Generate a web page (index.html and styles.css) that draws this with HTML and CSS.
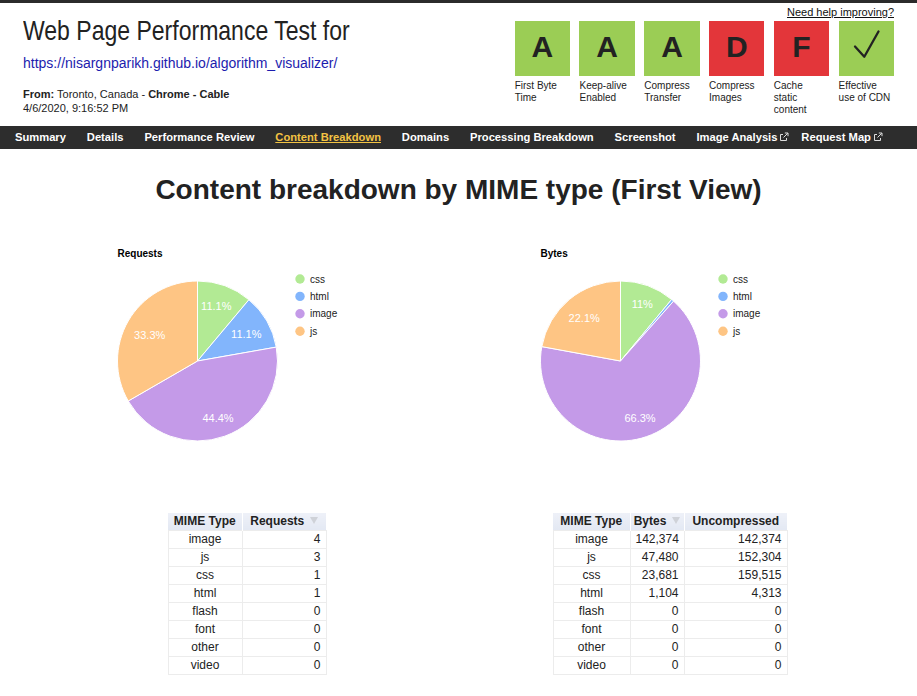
FILE: index.html
```html
<!DOCTYPE html>
<html lang="en">
<head>
<meta charset="utf-8">
<title>WebPageTest - Content Breakdown</title>
<link rel="stylesheet" href="styles.css">
</head>
<body>
<header class="header">
  <div class="test-info">
    <h1 class="title">Web Page Performance Test for</h1>
    <a class="url" href="#">https://nisargnparikh.github.io/algorithm_visualizer/</a>
    <div class="meta"><b>From:</b> Toronto, Canada - <b>Chrome - Cable</b><br>4/6/2020, 9:16:52 PM</div>
  </div>
  <div class="grades-wrap">
    <a class="help" href="#">Need help improving?</a>
    <ul class="grades">
      <li class="grade"><div class="box good">A</div><div class="label">First Byte<br>Time</div></li>
      <li class="grade"><div class="box good">A</div><div class="label">Keep-alive<br>Enabled</div></li>
      <li class="grade"><div class="box good">A</div><div class="label">Compress<br>Transfer</div></li>
      <li class="grade"><div class="box bad">D</div><div class="label">Compress<br>Images</div></li>
      <li class="grade"><div class="box bad">F</div><div class="label">Cache<br>static<br>content</div></li>
      <li class="grade"><div class="box good"><svg class="check" viewBox="0 0 55 55" width="55" height="55"><path d="M16 25.5L25.3 35.7L39.5 10.5" fill="none" stroke="#222" stroke-width="2.3" stroke-linecap="round" stroke-linejoin="round"/></svg></div><div class="label">Effective<br>use of CDN</div></li>
    </ul>
  </div>
</header>
<nav class="nav">
  <a href="#">Summary</a>
  <a href="#">Details</a>
  <a href="#">Performance Review</a>
  <a href="#" class="active">Content Breakdown</a>
  <a href="#">Domains</a>
  <a href="#">Processing Breakdown</a>
  <a href="#">Screenshot</a>
  <a href="#" class="ext">Image Analysis<svg class="ext-icon" viewBox="0 0 10 10" width="10" height="10"><path d="M4 2.5H1.5v6h6V6" fill="none" stroke="#ddd" stroke-width="1"/><path d="M4.5 5.5L8.8 1.2M5.8 1H9V4.2" fill="none" stroke="#ddd" stroke-width="1"/></svg></a>
  <a href="#" class="ext">Request Map<svg class="ext-icon" viewBox="0 0 10 10" width="10" height="10"><path d="M4 2.5H1.5v6h6V6" fill="none" stroke="#ddd" stroke-width="1"/><path d="M4.5 5.5L8.8 1.2M5.8 1H9V4.2" fill="none" stroke="#ddd" stroke-width="1"/></svg></a>
</nav>
<main class="main">
  <h2 class="heading">Content breakdown by MIME type (First View)</h2>
  <div class="charts">
    <section class="col">
      <svg class="chart" viewBox="0 0 423 250" width="423" height="250">
        <text x="81.5" y="32" class="chart-title">Requests</text>
        <g class="pie">
          <path fill="#b2ea94" d="M161.5 136L161.5 56A80 80 0 0 1 212.92 74.72Z"/>
          <path fill="#82b5fc" d="M161.5 136L212.92 74.72A80 80 0 0 1 240.28 122.11Z"/>
          <path fill="#c49ae8" d="M161.5 136L240.28 122.11A80 80 0 0 1 92.22 176Z"/>
          <path fill="#fec584" d="M161.5 136L92.22 176A80 80 0 0 1 161.5 56Z"/>
        </g>
        <g class="slice-labels">
          <text x="180.3" y="84.7">11.1%</text>
          <text x="210.3" y="113">11.1%</text>
          <text x="182" y="196.7">44.4%</text>
          <text x="113.7" y="114">33.3%</text>
        </g>
        <g class="legend">
          <circle cx="264" cy="54" r="4.7" fill="#b2ea94"/><text x="274" y="57.5">css</text>
          <circle cx="264" cy="71.4" r="4.7" fill="#82b5fc"/><text x="274" y="74.9">html</text>
          <circle cx="264" cy="88.8" r="4.7" fill="#c49ae8"/><text x="274" y="92.3">image</text>
          <circle cx="264" cy="106.2" r="4.7" fill="#fec584"/><text x="274" y="109.7">js</text>
        </g>
      </svg>
      <table class="data req">
        <colgroup><col class="c-type"><col class="c-req"></colgroup>
        <thead><tr><th>MIME Type</th><th>Requests<span class="sort"></span></th></tr></thead>
        <tbody>
          <tr><td class="type">image</td><td class="num">4</td></tr>
          <tr><td class="type">js</td><td class="num">3</td></tr>
          <tr><td class="type">css</td><td class="num">1</td></tr>
          <tr><td class="type">html</td><td class="num">1</td></tr>
          <tr><td class="type">flash</td><td class="num">0</td></tr>
          <tr><td class="type">font</td><td class="num">0</td></tr>
          <tr><td class="type">other</td><td class="num">0</td></tr>
          <tr><td class="type">video</td><td class="num">0</td></tr>
        </tbody>
      </table>
    </section>
    <section class="col">
      <svg class="chart" viewBox="0 0 423 250" width="423" height="250">
        <text x="81.5" y="32" class="chart-title">Bytes</text>
        <g class="pie">
          <path fill="#b2ea94" d="M161.5 136L161.5 56A80 80 0 0 1 212.63 74.47Z"/>
          <path fill="#82b5fc" d="M161.5 136L212.63 74.47A80 80 0 0 1 214.59 76.15Z"/>
          <path fill="#c49ae8" d="M161.5 136L214.59 76.15A80 80 0 1 1 82.8 121.62Z"/>
          <path fill="#fec584" d="M161.5 136L82.8 121.62A80 80 0 0 1 161.5 56Z"/>
        </g>
        <g class="slice-labels">
          <text x="183.3" y="83">11%</text>
          <text x="125.2" y="97.3">22.1%</text>
          <text x="181" y="196.7">66.3%</text>
        </g>
        <g class="legend">
          <circle cx="264" cy="54" r="4.7" fill="#b2ea94"/><text x="274" y="57.5">css</text>
          <circle cx="264" cy="71.4" r="4.7" fill="#82b5fc"/><text x="274" y="74.9">html</text>
          <circle cx="264" cy="88.8" r="4.7" fill="#c49ae8"/><text x="274" y="92.3">image</text>
          <circle cx="264" cy="106.2" r="4.7" fill="#fec584"/><text x="274" y="109.7">js</text>
        </g>
      </svg>
      <table class="data bytes">
        <colgroup><col class="c-type2"><col class="c-bytes"><col class="c-unc"></colgroup>
        <thead><tr><th>MIME Type</th><th>Bytes<span class="sort"></span></th><th>Uncompressed</th></tr></thead>
        <tbody>
          <tr><td class="type">image</td><td class="num">142,374</td><td class="num">142,374</td></tr>
          <tr><td class="type">js</td><td class="num">47,480</td><td class="num">152,304</td></tr>
          <tr><td class="type">css</td><td class="num">23,681</td><td class="num">159,515</td></tr>
          <tr><td class="type">html</td><td class="num">1,104</td><td class="num">4,313</td></tr>
          <tr><td class="type">flash</td><td class="num">0</td><td class="num">0</td></tr>
          <tr><td class="type">font</td><td class="num">0</td><td class="num">0</td></tr>
          <tr><td class="type">other</td><td class="num">0</td><td class="num">0</td></tr>
          <tr><td class="type">video</td><td class="num">0</td><td class="num">0</td></tr>
        </tbody>
      </table>
    </section>
  </div>
</main>
</body>
</html>
```

FILE: styles.css
```css
* { box-sizing: border-box; }

body {
  margin: 0;
  font-family: "Liberation Sans", Arial, sans-serif;
  color: #222;
  background: #fff;
}

/* ---------- header ---------- */
.header {
  display: flex;
  justify-content: space-between;
  height: 126px;
  border-top: 3px solid #2b2b2b;
  padding: 0 23px;
}

.test-info { padding-top: 12px; }

.title {
  margin: 0;
  font-family: "Liberation Sans", Arial, sans-serif;
  font-weight: 400;
  font-size: 28px;
  line-height: 32px;
  color: #222;
  white-space: nowrap;
  transform: scaleX(0.822);
  transform-origin: left center;
}

.url {
  display: block;
  margin-top: 8px;
  font-size: 14px;
  line-height: 16px;
  color: #1c1cae;
  text-decoration: none;
}

.meta {
  margin-top: 16px;
  font-size: 11px;
  line-height: 14px;
  color: #222;
}

.grades-wrap {
  display: flex;
  flex-direction: column;
  align-items: flex-end;
  padding-top: 2px;
}

.help {
  font-size: 11px;
  line-height: 14px;
  color: #111;
  text-decoration: underline;
}

.grades {
  display: flex;
  gap: 9.4px;
  list-style: none;
  margin: 2px 0 0;
  padding: 0;
}

.grade { width: 55.4px; }

.box {
  height: 55px;
  line-height: 51px;
  text-align: center;
  font-weight: 700;
  font-size: 30px;
  color: #222;
}
.box.good { background: #9bcd55; }
.box.bad { background: #e3363a; }
.check { display: block; }

.label {
  margin-top: 4px;
  font-size: 10px;
  line-height: 12px;
  color: #222;
}

/* ---------- nav ---------- */
.nav {
  display: flex;
  height: 23px;
  background: #2d2d2d;
  padding-left: 4.5px;
}
.nav a {
  padding: 0 10.45px;
  font-weight: 700;
  font-size: 11.2px;
  line-height: 23px;
  color: #fff;
  text-decoration: none;
  white-space: nowrap;
}
.nav a.active {
  color: #f3c343;
  text-decoration: underline;
}
.ext-icon {
  margin-left: 2px;
  margin-right: -9px;
  vertical-align: -0.5px;
}

/* ---------- main ---------- */
.heading {
  margin: 25px 0 0;
  text-align: center;
  font-weight: 700;
  font-size: 28px;
  line-height: 32px;
  color: #222;
}

.charts {
  display: flex;
  justify-content: center;
  margin-top: 19px;
}

.col { width: 423px; }

.chart { display: block; }
.chart-title {
  font-family: "Liberation Sans", Arial, sans-serif;
  font-weight: 700;
  font-size: 10px;
  fill: #000;
}
.pie path { stroke: #fff; stroke-width: 1; }
.slice-labels text {
  font-family: "Liberation Sans", Arial, sans-serif;
  font-size: 11px;
  fill: #fff;
  text-anchor: middle;
}
.legend text {
  font-family: "Liberation Sans", Arial, sans-serif;
  font-size: 10px;
  fill: #222;
}

/* ---------- tables ---------- */
.data {
  margin: 38px auto 0;
  border-collapse: collapse;
  table-layout: fixed;
  font-size: 12px;
  color: #222;
}
.data.req { width: 158px; }
.data.bytes { width: 234px; }
.c-type { width: 74px; }
.c-req { width: 84px; }
.c-type2 { width: 77px; }
.c-bytes { width: 54px; }
.c-unc { width: 103px; }

.data th {
  height: 17px;
  padding: 0 3px;
  line-height: 17px;
  font-weight: 700;
  text-align: center;
  white-space: nowrap;
  background: linear-gradient(#eef1f8, #e3e8f3);
  border: 0;
  border-right: 1px solid #fff;
}
.data th:last-child { border-right: 0; }

.sort {
  display: inline-block;
  width: 0;
  height: 0;
  margin-left: 6px;
  border-left: 4px solid transparent;
  border-right: 4px solid transparent;
  border-top: 7px solid #cfd2d8;
  vertical-align: 1px;
}

.data td {
  height: 17px;
  padding: 0 5px;
  line-height: 17px;
  border: 1px solid #ececec;
  white-space: nowrap;
}
.data td.type { text-align: center; }
.data td.num { text-align: right; }
```
